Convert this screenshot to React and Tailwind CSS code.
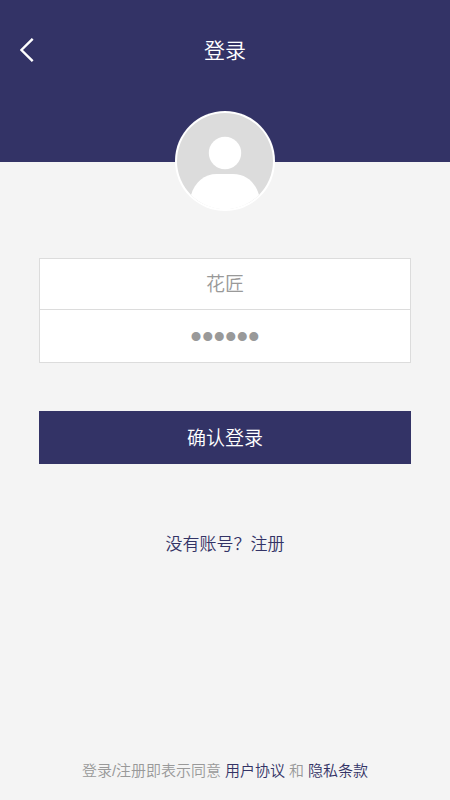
import { useState } from "react";

function BackIcon() {
  return (
    <svg width="14" height="24" viewBox="0 0 14 24" fill="none" aria-hidden="true">
      <path d="M12.7 0.8L1.4 12L12.7 23.2" stroke="#fff" strokeWidth="2.4" />
    </svg>
  );
}

function Avatar() {
  return (
    <svg width="100" height="100" viewBox="0 0 100 100" role="img" aria-label="头像">
      <circle cx="50" cy="50" r="50" fill="#fff" />
      <circle cx="50" cy="50" r="48" fill="#dcdcdc" />
      <circle cx="50" cy="42" r="16.2" fill="#fff" />
      <path
        d="M16 84C20 71 29 63 42 63H58C71 63 80 71 84 84A48 48 0 0 1 16 84Z"
        fill="#fff"
      />
    </svg>
  );
}

function Header() {
  return (
    <header className="h-[162px] bg-[#333366]">
      <div className="grid h-[100px] grid-cols-[1fr_auto_1fr] items-center px-5 text-white">
        <button type="button" aria-label="返回" className="justify-self-start">
          <BackIcon />
        </button>
        <h1 className="pt-0.5 text-[21px] font-[350]">登录</h1>
      </div>
    </header>
  );
}

function LoginForm() {
  const [username, setUsername] = useState("花匠");
  const [password, setPassword] = useState("123456");

  return (
    <form className="mt-[47px] w-full" onSubmit={(e) => e.preventDefault()}>
      <div className="divide-y divide-[#dcdcdc] border border-[#dcdcdc] bg-white text-[#999]">
        <input
          type="text"
          aria-label="用户名"
          value={username}
          onChange={(e) => setUsername(e.target.value)}
          className="block h-[51px] w-full pb-1 text-center text-[19px] font-[350] outline-none"
        />
        <input
          type="password"
          aria-label="密码"
          value={password}
          onChange={(e) => setPassword(e.target.value)}
          className="block h-[52px] w-full pt-0.5 text-center font-['Liberation_Sans',sans-serif] text-[33px] outline-none"
        />
      </div>
      <button type="submit" className="mt-12 h-[53px] w-full bg-[#333366] pt-1 text-[19px] font-[350] text-white">
        确认登录
      </button>
    </form>
  );
}

function App() {
  return (
    <div className="flex min-h-screen flex-col bg-[#f4f4f4] font-['Liberation_Sans','Noto_Sans_CJK_SC',sans-serif]">
      <Header />
      <main className="-mt-[51px] flex flex-col items-center px-[39px]">
        <Avatar />
        <LoginForm />
        <a href="#register" className="mt-[68px] text-[17px] font-[350] text-[#333366]">
          没有账号？注册
        </a>
      </main>
      <footer className="mt-auto flex justify-center gap-1 pb-[18px] text-[15px] font-[350] text-[#999]">
        <span>登录/注册即表示同意</span>
        <a href="#terms" className="text-[#333366]">用户协议</a>
        <span>和</span>
        <a href="#privacy" className="text-[#333366]">隐私条款</a>
      </footer>
    </div>
  );
}

export default App;
